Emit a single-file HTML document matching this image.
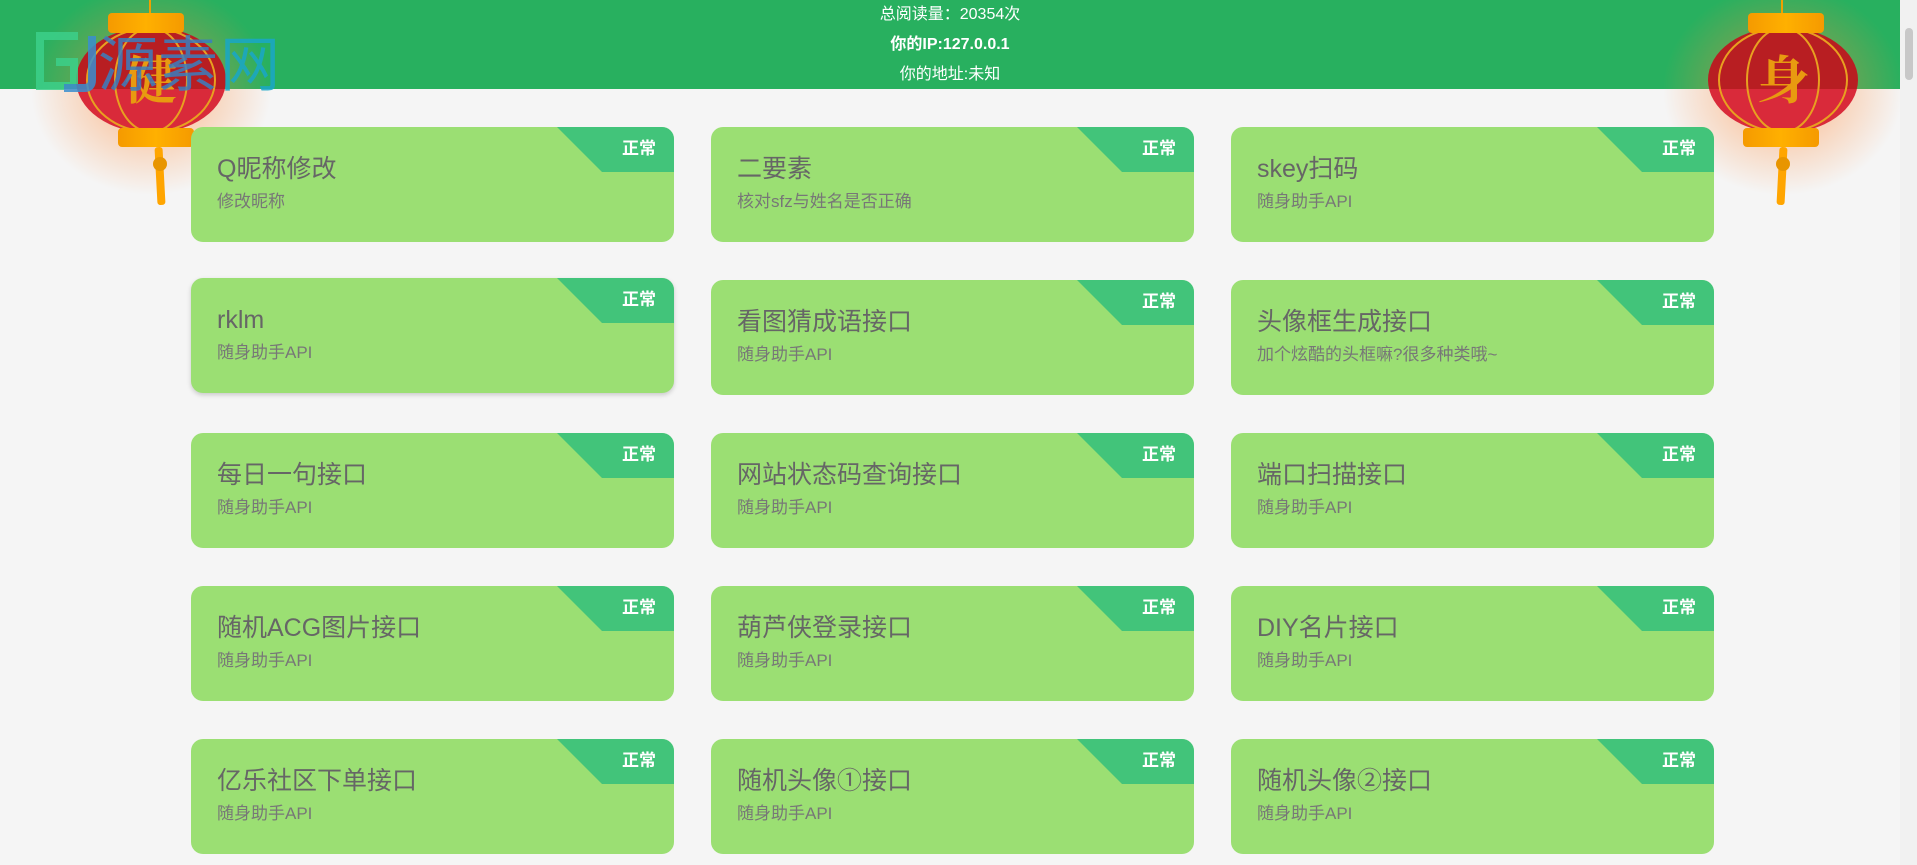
<!DOCTYPE html>
<html><head><meta charset="utf-8">
<style>
*{margin:0;padding:0;box-sizing:border-box}
html,body{width:1917px;height:865px;overflow:hidden;background:#f5f5f5;font-family:"Liberation Sans","Noto Sans CJK SC",sans-serif}
.hdr{position:absolute;left:0;top:0;width:1900px;height:89px;background:#28b05f;color:#fff;text-align:center;font-size:16px}
.hdr div{height:30px;line-height:30px}
.hdr .b{font-weight:bold}
.card{position:absolute;width:483px;height:115px;background:#9bdf73;border-radius:12px;overflow:hidden}
.card.sh{box-shadow:0 2px 5px rgba(0,0,0,.18)}
.rib{position:absolute;right:0;top:0;width:117px;height:45px;background:#42c47a;clip-path:polygon(0 0,100% 0,100% 100%,45px 100%)}
.tag{position:absolute;right:18px;top:11px;color:#fff;font-weight:bold;font-size:17px;line-height:22px}
.t{position:absolute;left:26px;top:26px;font-size:25px;color:#666;line-height:32px}
.s{position:absolute;left:26px;top:63px;font-size:17px;color:#777;line-height:24px}
.lan{position:absolute;width:150px;height:210px}
.lan .glow{position:absolute;left:-45px;top:-15px;width:240px;height:210px;border-radius:50%;background:radial-gradient(closest-side,rgba(255,120,30,.55),rgba(255,140,60,.25) 60%,rgba(255,160,80,0))}
.lan .str{position:absolute;left:73px;top:0;width:2px;height:15px;background:#f0a000}
.lan .cap{position:absolute;left:32px;top:13px;width:76px;height:20px;border-radius:4px;background:linear-gradient(90deg,#f59a00,#ffb000 50%,#f59a00)}
.lan .body{position:absolute;left:0;top:27px;width:150px;height:106px;border-radius:50%;background:linear-gradient(#b81e22 62px,#d92a3a 62px);overflow:hidden}
.lan .body i{position:absolute;top:0;height:106px;border:2px solid #e8a020;border-radius:50%}
.lan .cap2{position:absolute;left:42px;top:128px;width:76px;height:19px;border-radius:4px;background:linear-gradient(90deg,#f59a00,#ffb000 50%,#f59a00)}
.lan .tas{position:absolute;left:80px;top:147px;width:8px;height:58px;background:#ffa500;border-radius:3px;transform:rotate(-3deg)}
.lan .knob{position:absolute;left:77px;top:157px;width:14px;height:14px;background:#e89500;border-radius:50%}
.lan .ch{position:absolute;left:0;width:150px;top:12px;text-align:center;font-size:52px;color:#e89a10;font-family:"Noto Serif CJK SC",serif;font-weight:bold}
.logo{position:absolute;left:30px;top:30px;height:62px;opacity:.85}
.sb{position:absolute;right:0;top:0;width:17px;height:865px;background:#f1f1f1}
.sb i{position:absolute;left:5px;top:28px;width:8px;height:52px;background:#c8c8c8;border-radius:4px}
</style></head><body>
<div class="hdr"><div>总阅读量：20354次</div><div class="b">你的IP:127.0.0.1</div><div>你的地址:未知</div></div>

<div class="lan" style="left:76px;top:0"><div class="glow"></div><div class="str"></div><div class="body"><i style="left:38px;width:74px"></i><i style="left:10px;width:130px"></i><div class="ch">健</div></div><div class="cap"></div><div class="cap2"></div><div class="tas"></div><div class="knob"></div></div>
<div class="lan" style="left:1708px;top:0"><div class="glow"></div><div class="str"></div><div class="body"><i style="left:38px;width:74px"></i><i style="left:10px;width:130px"></i><div class="ch">身</div></div><div class="cap" style="left:40px"></div><div class="cap2" style="left:35px"></div><div class="tas" style="left:70px;transform:rotate(3deg)"></div><div class="knob" style="left:68px"></div></div>

<div class="logo">
<svg width="260" height="66" viewBox="0 0 260 66" style="position:absolute;left:0;top:0">
<path d="M48 6H10v50h34V32H26" fill="none" stroke="#3cd08a" stroke-width="8"/>
<path d="M62 6v44q0 8-8 8H34" fill="none" stroke="#3a8fd0" stroke-width="8"/>
<text x="68" y="56" font-size="60" fill="#3a7fc0" font-family="Noto Sans CJK SC,sans-serif">源素</text>
<text x="190" y="56" font-size="60" fill="#19a7c8" font-family="Noto Sans CJK SC,sans-serif">网</text>
</svg></div>

<div class="card" style="left:191px;top:127px"><div class="rib"></div><div class="tag">正常</div><div class="t">Q昵称修改</div><div class="s">修改昵称</div></div>
<div class="card" style="left:711px;top:127px"><div class="rib"></div><div class="tag">正常</div><div class="t">二要素</div><div class="s">核对sfz与姓名是否正确</div></div>
<div class="card" style="left:1231px;top:127px"><div class="rib"></div><div class="tag">正常</div><div class="t">skey扫码</div><div class="s">随身助手API</div></div>

<div class="card sh" style="left:191px;top:278px"><div class="rib"></div><div class="tag">正常</div><div class="t">rklm</div><div class="s">随身助手API</div></div>
<div class="card" style="left:711px;top:280px"><div class="rib"></div><div class="tag">正常</div><div class="t">看图猜成语接口</div><div class="s">随身助手API</div></div>
<div class="card" style="left:1231px;top:280px"><div class="rib"></div><div class="tag">正常</div><div class="t">头像框生成接口</div><div class="s">加个炫酷的头框嘛?很多种类哦~</div></div>

<div class="card" style="left:191px;top:433px"><div class="rib"></div><div class="tag">正常</div><div class="t">每日一句接口</div><div class="s">随身助手API</div></div>
<div class="card" style="left:711px;top:433px"><div class="rib"></div><div class="tag">正常</div><div class="t">网站状态码查询接口</div><div class="s">随身助手API</div></div>
<div class="card" style="left:1231px;top:433px"><div class="rib"></div><div class="tag">正常</div><div class="t">端口扫描接口</div><div class="s">随身助手API</div></div>

<div class="card" style="left:191px;top:586px"><div class="rib"></div><div class="tag">正常</div><div class="t">随机ACG图片接口</div><div class="s">随身助手API</div></div>
<div class="card" style="left:711px;top:586px"><div class="rib"></div><div class="tag">正常</div><div class="t">葫芦侠登录接口</div><div class="s">随身助手API</div></div>
<div class="card" style="left:1231px;top:586px"><div class="rib"></div><div class="tag">正常</div><div class="t">DIY名片接口</div><div class="s">随身助手API</div></div>

<div class="card" style="left:191px;top:739px"><div class="rib"></div><div class="tag">正常</div><div class="t">亿乐社区下单接口</div><div class="s">随身助手API</div></div>
<div class="card" style="left:711px;top:739px"><div class="rib"></div><div class="tag">正常</div><div class="t">随机头像①接口</div><div class="s">随身助手API</div></div>
<div class="card" style="left:1231px;top:739px"><div class="rib"></div><div class="tag">正常</div><div class="t">随机头像②接口</div><div class="s">随身助手API</div></div>

<div class="sb"><i></i></div>
</body></html>
